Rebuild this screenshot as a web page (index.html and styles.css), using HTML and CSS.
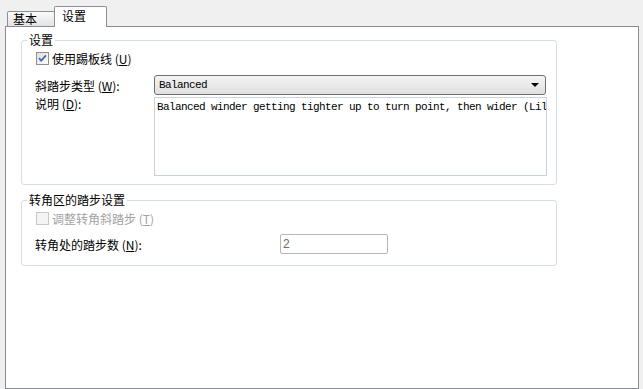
FILE: index.html
```html
<!DOCTYPE html>
<html lang="zh-CN">
<head>
  <meta charset="UTF-8" />
  <title>设置</title>
  <link rel="stylesheet" href="styles.css">
</head>
<body>

<div class="tabs">
  <div class="tab">基本</div>
  <div class="tab tab-active">设置</div>
</div>

<div class="panel">
  <fieldset class="group group-main">
    <legend>设置</legend>
    <div class="row row-check">
      <span class="check">
        <svg width="13" height="13" viewBox="0 0 13 13">
          <defs>
            <linearGradient id="boxFill" x1="0" y1="0" x2="1" y2="1">
              <stop offset="0" stop-color="#dcdcd7"/>
              <stop offset="1" stop-color="#ffffff"/>
            </linearGradient>
          </defs>
          <rect x="0.5" y="0.5" width="12" height="12" fill="url(#boxFill)" stroke="#8e8f8f"/>
          <path d="M3 6.2 L5.2 8.6 L10 3.4" fill="none" stroke="#4466b8" stroke-width="1.8"/>
        </svg>
      </span>
      <span>使用踢板线 (<u>U</u>)</span>
    </div>
    <div class="row row-select">
      <label class="label">斜踏步类型 (<u>W</u>):</label>
      <div class="select">
        <span>Balanced</span>
        <span class="arrow"></span>
      </div>
    </div>
    <div class="row row-desc">
      <label class="label label-top">说明 (<u>D</u>):</label>
      <div class="memo">Balanced winder getting tighter up to turn point, then wider (Lil</div>
    </div>
  </fieldset>

  <fieldset class="group group-corner">
    <legend>转角区的踏步设置</legend>
    <div class="row row-check disabled">
      <span class="check check-off"></span>
      <span>调整转角斜踏步 (<u>T</u>)</span>
    </div>
    <div class="row row-count">
      <label class="label label-wide">转角处的踏步数 (<u>N</u>):</label>
      <div class="field">2</div>
    </div>
  </fieldset>
</div>

</body>
</html>
```

FILE: styles.css
```css
body {
  margin: 0;
  width: 643px;
  height: 389px;
  overflow: hidden;
  background-color: #f0f0f0;
  font-family: "Noto Sans CJK SC", "Liberation Sans", sans-serif;
  font-size: 12px;
  color: #000;
}

u {
  text-decoration: underline;
}

/* barra de abas */
.tabs {
  display: flex;
  align-items: flex-end;
  height: 26px;
  padding-left: 7px;
}

.tab {
  box-sizing: border-box;
  width: 48px;
  height: 15px;
  padding-left: 5px;
  border: 1px solid #8c8f98;
  border-bottom: none;
  border-radius: 2px 2px 0 0;
  background: linear-gradient(#fbfbfb, #e2e2e2);
  line-height: 14px;
}

.tab-active {
  position: relative;
  z-index: 1;
  width: 53px;
  height: 21px;
  margin-left: -1px;
  margin-bottom: -1px;
  padding-left: 7px;
  background: #fff;
  line-height: 18px;
}

.panel {
  box-sizing: border-box;
  width: 634px;
  height: 363px;
  margin-left: 5px;
  padding: 5px 0 0 15px;
  border: 1px solid #898c95;
  background-color: #fff;
}

/* grupos */
.group {
  box-sizing: border-box;
  width: 536px;
  margin: 0;
  padding: 0 0 8px 13px;
  border: 1px solid #d5dde6;
  border-radius: 3px;
}

.group legend {
  margin-left: -8px;
  padding: 0 2px;
  line-height: 16px;
}

.group-corner {
  margin-top: 7px;
  padding-bottom: 11px;
}

.row {
  display: flex;
  align-items: center;
}

.row-check {
  height: 16px;
  margin-top: 2px;
}

.row-select {
  margin-top: 9px;
}

.row-desc {
  align-items: flex-start;
  margin-top: 2px;
}

.row-count {
  margin-top: 8px;
}

.label {
  width: 119px;
  flex: none;
}

.label-top {
  line-height: 14px;
}

.label-wide {
  width: 245px;
}

.check {
  display: flex;
  width: 13px;
  height: 13px;
  margin: 0 3px 0 1px;
}

.check-off {
  box-sizing: border-box;
  border: 1px solid #c6c7c8;
  background-color: #f4f4f4;
}

.disabled {
  color: #a2a2a2;
}

/* controles */
.select {
  box-sizing: border-box;
  display: flex;
  align-items: center;
  justify-content: space-between;
  width: 392px;
  height: 20px;
  padding: 0 6px 0 4px;
  border: 1px solid #707070;
  border-radius: 3px;
  background: linear-gradient(#f4f4f4, #e0e0e0);
  font-family: "Liberation Mono", monospace;
  font-size: 11px;
  letter-spacing: -0.6px;
}

.arrow {
  width: 0;
  height: 0;
  border-left: 4px solid transparent;
  border-right: 4px solid transparent;
  border-top: 4px solid #000;
}

.memo {
  box-sizing: border-box;
  width: 393px;
  height: 79px;
  padding: 2px 2px;
  border: 1px solid #c9d2db;
  overflow: hidden;
  white-space: nowrap;
  font-family: "Liberation Mono", monospace;
  font-size: 11px;
  letter-spacing: -0.6px;
  line-height: 14px;
}

.field {
  box-sizing: border-box;
  width: 108px;
  height: 20px;
  padding-left: 2px;
  border: 1px solid #b5b7bd;
  border-radius: 2px;
  color: #6d6d6d;
  font-family: "Liberation Sans", sans-serif;
  font-size: 12px;
  line-height: 18px;
}
```
